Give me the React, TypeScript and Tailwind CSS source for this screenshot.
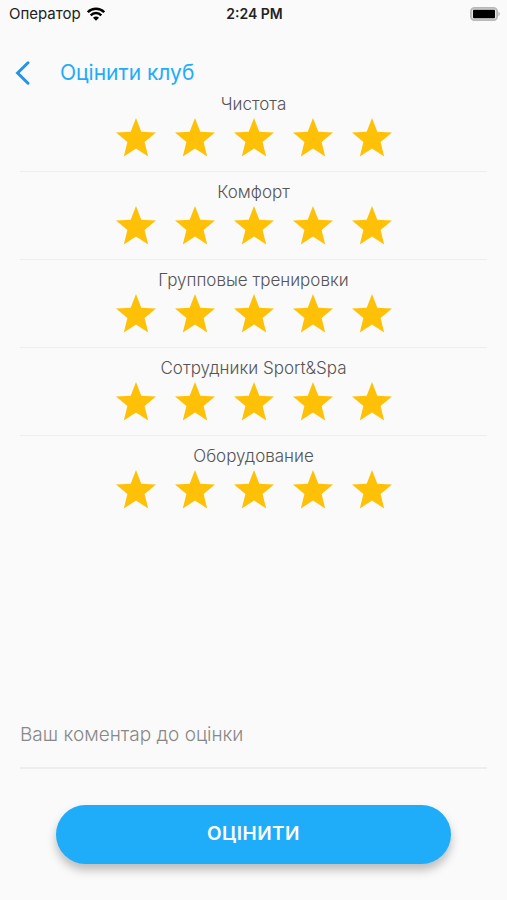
import { useState } from 'react';

const categories = [
  'Чистота',
  'Комфорт',
  'Групповые тренировки',
  'Сотрудники Sport&Spa',
  'Оборудование',
];

function WifiIcon() {
  return (
    <svg viewBox="0 0 18 14" className="h-[14px] w-[18px]" aria-hidden="true">
      <g fill="none" stroke="#000" strokeWidth="2.5">
        <path d="M0.8 5.2a11.6 11.6 0 0 1 16.4 0" />
        <path d="M3.7 8.3a7.5 7.5 0 0 1 10.6 0" />
      </g>
      <path d="M9 13.7 6 10.7a4.2 4.2 0 0 1 6 0Z" />
    </svg>
  );
}

function BatteryIcon() {
  return (
    <svg viewBox="0 0 30 14" className="h-[14px] w-[30px]" aria-hidden="true">
      <rect x="0.9" y="0.9" width="26.2" height="12.2" rx="3.6" fill="#e4e4e4" stroke="#b8b8b8" strokeWidth="1.8" />
      <rect x="3" y="2.8" width="22" height="8.4" rx="1" />
      <path d="M28.3 4.8c2 .7 2 3.7 0 4.4Z" fill="#b8b8b8" />
    </svg>
  );
}

function BackIcon() {
  return (
    <svg viewBox="0 0 15 24" className="h-6 w-[15px]" fill="none" stroke="#2594e6" strokeWidth="3" aria-hidden="true">
      <path d="M13 1.8 2.6 12 13 22.2" strokeLinecap="round" />
    </svg>
  );
}

function StatusBar() {
  return (
    <div className="grid h-7 grid-cols-3 items-center pl-[9px] pr-[7px] text-[15px] text-[#222]">
      <div className="flex items-center gap-[6px]">
        <span>Оператор</span>
        <WifiIcon />
      </div>
      <span className="text-center text-sm font-semibold">2:24 PM</span>
      <div className="flex justify-end">
        <BatteryIcon />
      </div>
    </div>
  );
}

interface RatingRowProps {
  label: string;
  value: number;
  onChange: (value: number) => void;
}

function RatingRow({ label, value, onChange }: RatingRowProps) {
  return (
    <li className="border-b border-[#eee] pt-[10px] pb-[14px] last:border-transparent">
      <p className="text-center text-[17px] leading-5 font-light text-[#555]">{label}</p>
      <div role="group" aria-label={label} className="mt-1 flex justify-center gap-[19px]">
        {[1, 2, 3, 4, 5].map((star) => (
          <button
            key={star}
            type="button"
            aria-label={`${label}: ${star}`}
            aria-pressed={star <= value}
            onClick={() => onChange(star)}
            className="cursor-pointer"
          >
            <svg
              viewBox="0 0 40 39"
              className={`h-[39px] w-10 ${star <= value ? 'fill-[#ffc107]' : 'fill-[#ddd]'}`}
            >
              <path d="M20 0 25.3 13.7 40 14.6 28.6 24 32.2 38.4 20 30.5 7.8 38.4 11.4 24 0 14.6 14.7 13.7Z" />
            </svg>
          </button>
        ))}
      </div>
    </li>
  );
}

export default function App() {
  const [ratings, setRatings] = useState<number[]>(categories.map(() => 5));
  const [comment, setComment] = useState('');

  const handleRate = (index: number, value: number) => {
    setRatings((prev) => prev.map((r, i) => (i === index ? value : r)));
  };

  return (
    <div className="flex min-h-screen flex-col bg-[#fafafa] font-['Inter','Liberation_Sans',sans-serif]">
      <StatusBar />

      <header className="flex h-14 items-center gap-[30px] pt-[34px] pl-[15px] text-[#1facf8]">
        <button type="button" aria-label="Назад" className="cursor-pointer">
          <BackIcon />
        </button>
        <h1 className="text-[21px] leading-6 font-normal">Оцінити клуб</h1>
      </header>

      <form className="flex flex-1 flex-col" onSubmit={(e) => e.preventDefault()}>
        <ul className="mx-5">
          {categories.map((label, index) => (
            <RatingRow
              key={label}
              label={label}
              value={ratings[index]}
              onChange={(value) => handleRate(index, value)}
            />
          ))}
        </ul>

        <div className="mx-5 mt-auto flex">
          <input
            type="text"
            aria-label="Ваш коментар до оцінки"
            placeholder="Ваш коментар до оцінки"
            value={comment}
            onChange={(e) => setComment(e.target.value)}
            className="w-full border-b-2 border-[#eee] pb-[18px] text-[19px] leading-7 font-light text-[#555] outline-none placeholder:text-[#888]"
          />
        </div>

        <button
          type="submit"
          className="mx-14 mt-9 mb-9 h-[59px] cursor-pointer rounded-full bg-[#1facf8] text-[19px] font-semibold tracking-wide text-white shadow-[0_6px_10px_rgba(0,0,0,0.25)]"
        >
          ОЦІНИТИ
        </button>
      </form>
    </div>
  );
}
